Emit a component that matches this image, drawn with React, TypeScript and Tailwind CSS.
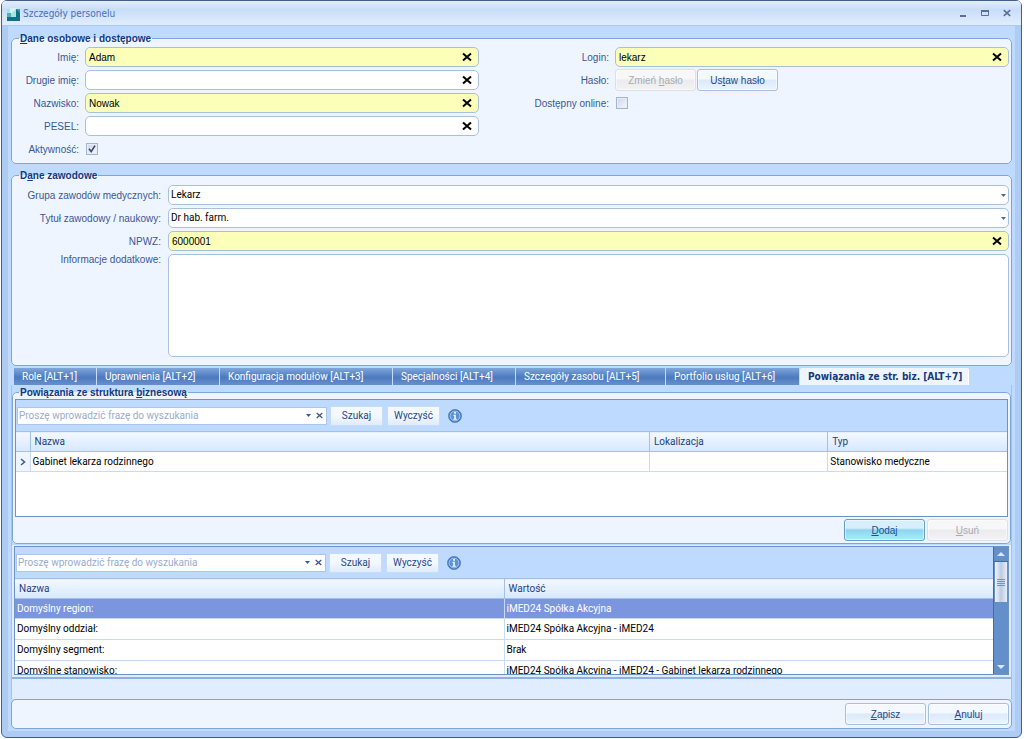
import { useId, useState } from "react";
import type { ReactNode } from "react";

const tabs = [
  { label: "Role [ALT+1]", width: "w-[83px]" },
  { label: "Uprawnienia [ALT+2]", width: "w-[123px]" },
  { label: "Konfiguracja modułów [ALT+3]", width: "w-[173px]" },
  { label: "Specjalności [ALT+4]", width: "w-[123px]" },
  { label: "Szczegóły zasobu [ALT+5]", width: "w-[150px]" },
  { label: "Portfolio usług [ALT+6]", width: "w-[134px]" },
  { label: "Powiązania ze str. biz. [ALT+7]", width: "w-[169px]" },
];

const settings = [
  { name: "Domyślny region:", value: "iMED24 Spółka Akcyjna" },
  { name: "Domyślny oddział:", value: "iMED24 Spółka Akcyjna - iMED24" },
  { name: "Domyślny segment:", value: "Brak" },
  {
    name: "Domyślne stanowisko:",
    value: "iMED24 Spółka Akcyjna - iMED24 - Gabinet lekarza rodzinnego",
  },
];

const headCell =
  "h-5 border-r border-b border-[#a3c0e8] bg-linear-to-b from-[#f3f8ff] to-[#d6e8ff] text-left font-normal text-[#1e3f7f] last:border-r-0";

function CrossIcon({ className }: { className: string }) {
  return (
    <svg viewBox="0 0 10 10" className={className} fill="none" stroke="currentColor">
      <path d="M1 1.4 9 8.6M9 1.4 1 8.6" />
    </svg>
  );
}

function Caret({ className = "" }: { className?: string }) {
  return (
    <svg viewBox="0 0 5 3" className={`h-[3px] w-[5px] ${className}`} fill="currentColor">
      <path d="M0 0h5L2.5 3z" />
    </svg>
  );
}

function InfoIcon() {
  return (
    <svg viewBox="0 0 14 14" className="size-[14px]">
      <circle cx="7" cy="7" r="6.5" fill="#2f66b4" stroke="#5d8ac8" />
      <circle cx="7" cy="7" r="5" fill="#5b93d8" stroke="#c9dff8" strokeWidth="0.8" />
      <path d="M5.4 5.7h2.4v4.1h1v1H5.3v-1h1V6.7h-.9zM6.2 3h1.7v1.7H6.2z" fill="#fff" />
    </svg>
  );
}

function Group({
  legend,
  className,
  children,
}: {
  legend: ReactNode;
  className: string;
  children: ReactNode;
}) {
  return (
    <fieldset
      className={`min-w-0 rounded-[5px] border border-[#7fa5d8] bg-[#eff5ff] ${className}`}
    >
      <legend className="ml-1 h-[14px] px-px font-[Liberation_Sans,sans-serif] leading-4 font-bold text-[#123a80]">
        {legend}
      </legend>
      {children}
    </fieldset>
  );
}

const labelStyle =
  "flex h-5 items-center justify-end pt-[2px] font-[Liberation_Sans,sans-serif] whitespace-nowrap text-[#3a5795]";

function TextField({
  label,
  value = "",
  required = false,
  labelClass = "",
}: {
  label: string;
  value?: string;
  required?: boolean;
  labelClass?: string;
}) {
  const id = useId();
  const [text, setText] = useState(value);
  return (
    <>
      <label htmlFor={id} className={`${labelStyle} ${labelClass}`}>
        {label}
      </label>
      <div
        className={`flex h-5 min-w-0 items-center rounded-[5px] border border-[#a9c0dd] pr-[6px] ${
          required ? "bg-[#fbffb8]" : "bg-white"
        }`}
      >
        <input
          id={id}
          value={text}
          onChange={(e) => setText(e.target.value)}
          className="h-full min-w-0 flex-1 bg-transparent pl-[3px] font-[Liberation_Sans,sans-serif] text-black outline-none"
        />
        <button type="button" aria-label="Wyczyść pole" onClick={() => setText("")}>
          <CrossIcon className="size-[10px] stroke-2 text-black" />
        </button>
      </div>
    </>
  );
}

function SelectField({ label, value }: { label: string; value: string }) {
  const id = useId();
  return (
    <>
      <label htmlFor={id} className={labelStyle}>
        {label}
      </label>
      <div className="relative h-5">
        <select
          id={id}
          className="h-5 w-full appearance-none rounded-[5px] border border-[#a9c0dd] bg-white pl-[2px] text-black outline-none"
        >
          <option>{value}</option>
        </select>
        <Caret className="pointer-events-none absolute top-[9px] right-[3px] text-[#4a6a96]" />
      </div>
    </>
  );
}

function CheckField({
  label,
  checked = false,
  labelClass = "",
}: {
  label: string;
  checked?: boolean;
  labelClass?: string;
}) {
  const id = useId();
  return (
    <>
      <label htmlFor={id} className={`${labelStyle} ${labelClass}`}>
        {label}
      </label>
      <div className="relative flex h-5 items-center pl-px">
        <input
          id={id}
          type="checkbox"
          defaultChecked={checked}
          className="peer size-3 appearance-none border border-[#a3b5cf] bg-linear-to-br from-[#ccd6e6] to-[#f6f9fd] shadow-[inset_0_0_0_1px_#e6edf7]"
        />
        <svg
          viewBox="0 0 12 12"
          className="pointer-events-none absolute left-px hidden size-3 peer-checked:block"
          fill="none"
          stroke="#3c4c6c"
          strokeWidth="1.7"
        >
          <path d="M3 5.8 5.2 8.6 9 2.6" />
        </svg>
      </div>
    </>
  );
}

function DialogButton({
  variant = "normal",
  children,
}: {
  variant?: "normal" | "primary" | "disabled";
  children: ReactNode;
}) {
  const look = {
    normal:
      "border-[#a5c0e2] bg-linear-to-b from-[#f4f8ff] from-45% via-[#dbe9fb] via-50% to-[#ecf4ff] text-[#26478a]",
    primary:
      "border-[#6a9cc8] bg-linear-to-b from-[#d6effb] from-40% via-[#8fd3ee] via-50% to-[#a4f0fb] text-[#1c4f96]",
    disabled:
      "border-[#dcdfe6] bg-linear-to-b from-[#f7f7f8] from-45% via-[#ebebed] via-50% to-[#f3f3f4] text-[#a9abb1]",
  };
  return (
    <button
      type="button"
      disabled={variant === "disabled"}
      className={`h-[22px] w-[81px] rounded-[3px] border pt-[2px] font-[Liberation_Sans,sans-serif] shadow-[inset_0_0_0_1px_#ffffff80] ${look[variant]}`}
    >
      {children}
    </button>
  );
}

function SearchBar() {
  const button =
    "h-5 w-[53px] border border-[#c9dcf5] bg-linear-to-b from-[#f4f9ff] from-45% to-[#dfecfc] text-[#26478a]";
  return (
    <div className="flex h-[31px] items-center bg-[#bfdaff] pl-px">
      <div className="flex h-[18px] w-[310px] items-center border border-[#a9c6ee] bg-white pr-[3px] text-[#3a5795]">
        <input
          aria-label="Fraza do wyszukania"
          placeholder="Proszę wprowadzić frazę do wyszukania"
          className="min-w-0 flex-1 bg-transparent pl-px outline-none placeholder:text-[#9aaccb]"
        />
        <button type="button" aria-label="Rozwiń" className="px-[5px]">
          <Caret />
        </button>
        <button type="button" aria-label="Wyczyść frazę">
          <CrossIcon className="size-[7px] stroke-[1.8]" />
        </button>
      </div>
      <button type="button" className={`ml-[3px] ${button}`}>
        Szukaj
      </button>
      <button type="button" className={`mr-2 ml-1 ${button}`}>
        Wyczyść
      </button>
      <InfoIcon />
    </div>
  );
}

function TitleBar() {
  return (
    <header className="flex h-[25px] shrink-0 items-center rounded-t-[4px] border-b border-[#abc8ef] bg-linear-to-b from-[#e4eefc] via-[#c9ddfa] via-35% to-[#e0edfd] pr-[10px] pl-[5px] text-[#4a6fb5]">
      <svg viewBox="0 0 14 14" className="mt-1 mr-[2px] size-[14px]">
        <path d="M0 1h9v9H0z" fill="#a9e2e2" />
        <path d="M3 0h7L3 7z" fill="#d3f3f1" />
        <path d="M0 5h4v4H0z" fill="#4fb0b6" />
        <path d="M9 1h4v12H0V9h9z" fill="#0f7284" />
        <path d="M9 1h4v4z" fill="#3d9ea9" />
      </svg>
      <h1 className="mt-[2px] flex-1 font-[DejaVu_Sans_Condensed,sans-serif]">
        Szczegóły personelu
      </h1>
      <div className="flex items-center gap-[14px] text-[#5a6f96]">
        <button type="button" aria-label="Minimalizuj">
          <svg viewBox="0 0 8 8" className="size-2">
            <path d="M1 6h6v2H1z" fill="currentColor" />
          </svg>
        </button>
        <button type="button" aria-label="Maksymalizuj">
          <svg viewBox="0 0 8 8" className="size-2">
            <path d="M.5 1.5h7v5h-7z" fill="none" stroke="currentColor" />
            <path d="M0 1h8v2H0z" fill="currentColor" />
          </svg>
        </button>
        <button type="button" aria-label="Zamknij">
          <CrossIcon className="size-2 stroke-2" />
        </button>
      </div>
    </header>
  );
}

function ScrollBar() {
  return (
    <div className="flex w-[15px] flex-col items-center border-l border-[#3d6cb0] bg-[#638fcb] text-[#dce8fa]">
      <div className="flex h-[15px] w-full items-center justify-center border-b border-[#3d6cb0]">
        <svg viewBox="0 0 8 4" className="h-1 w-2" fill="currentColor">
          <path d="M4 0l4 4H0z" />
        </svg>
      </div>
      <div className="flex h-10 w-3 flex-col items-center justify-center gap-px bg-linear-to-r from-[#f2f6fc] via-[#bccbe2] to-[#e6edf8]">
        <span className="h-px w-2 bg-[#6f94c8]" />
        <span className="h-px w-2 bg-[#6f94c8]" />
        <span className="h-px w-2 bg-[#6f94c8]" />
        <span className="h-px w-2 bg-[#6f94c8]" />
      </div>
      <svg viewBox="0 0 8 4" className="mt-auto mb-[5px] h-1 w-2" fill="currentColor">
        <path d="M0 0h8L4 4z" />
      </svg>
    </div>
  );
}

export default function App() {
  const [activeTab, setActiveTab] = useState(6);
  const [selected, setSelected] = useState(0);

  return (
    <div className="min-h-screen bg-white pr-[2px] pb-px pl-px font-[Roboto,Tahoma,sans-serif] text-[10px] leading-[14px]">
      <div className="flex min-h-[738px] flex-col rounded-[6px] border border-[#42608f] bg-[#aecbf4]">
        <TitleBar />

        <main className="mx-[6px] mb-[6px] flex flex-1 flex-col bg-[#bfdaff] px-[3px] pt-[5px] pb-[2px]">
          <Group
            legend={
              <>
                <u>D</u>ane osobowe i dostępowe
              </>
            }
            className="pt-[2px] pr-[2px] pb-1 pl-[3px]"
          >
            <div className="grid grid-cols-[64px_1fr_124px_1fr] gap-x-[6px] gap-y-[3px]">
              <TextField label="Imię:" value="Adam" required />
              <TextField label="Login:" value="lekarz" required />
              <TextField label="Drugie imię:" />
              <span className={labelStyle}>Hasło:</span>
              <div className="-my-px flex gap-px">
                <DialogButton variant="disabled">
                  Zmień <u>h</u>asło
                </DialogButton>
                <DialogButton>
                  Us<u>t</u>aw hasło
                </DialogButton>
              </div>
              <TextField label="Nazwisko:" value="Nowak" required />
              <CheckField label="Dostępny online:" />
              <TextField label="PESEL:" />
              <CheckField label="Aktywność:" checked labelClass="col-start-1" />
            </div>
          </Group>

          <Group
            legend={
              <>
                D<u>a</u>ne zawodowe
              </>
            }
            className="mt-1 pt-[3px] pr-[2px] pb-2 pl-[3px]"
          >
            <div className="grid grid-cols-[146px_1fr] gap-x-[7px] gap-y-[3px]">
              <SelectField label="Grupa zawodów medycznych:" value="Lekarz" />
              <SelectField label="Tytuł zawodowy / naukowy:" value="Dr hab. farm." />
              <TextField label="NPWZ:" value="6000001" required />
              <label htmlFor="notes" className={`${labelStyle} h-[10px]`}>
                Informacje dodatkowe:
              </label>
              <textarea
                id="notes"
                className="block h-[103px] w-full resize-none rounded-[5px] border border-[#a9c0dd] bg-white p-1 outline-none"
              />
            </div>
          </Group>

          <div role="tablist" className="mt-[2px] flex pl-[3px]">
            {tabs.map((tab, index) => (
              <button
                key={tab.label}
                type="button"
                role="tab"
                aria-selected={index === activeTab}
                onClick={() => setActiveTab(index)}
                className={`h-[17px] border-r pl-2 text-left whitespace-nowrap ${tab.width} ${
                  index === activeTab
                    ? "rounded-t-[2px] border-white bg-[#eff5ff] font-[DejaVu_Sans_Condensed,sans-serif] font-bold text-[#123a80]"
                    : "border-[#c5dbf8] bg-linear-to-b from-[#80a6da] via-[#4c7abf] via-55% to-[#688fcc] text-white"
                }`}
              >
                {tab.label}
              </button>
            ))}
          </div>

          <section className="flex flex-1 flex-col border-x border-[#a3c3ee]">
            <Group
              legend={
                <>
                  Powiązania ze struktura <u>b</u>iznesową
                </>
              }
              className="px-[2px] pb-[2px]"
            >
              <div className="h-[118px] border border-[#6c93c8] bg-white">
                <SearchBar />
                <table className="w-full table-fixed border-collapse border-t border-[#a3c0e8]">
                  <thead>
                    <tr>
                      <th className={`w-[14px] ${headCell}`} />
                      <th className={`w-[62.5%] pl-1 ${headCell}`}>Nazwa</th>
                      <th className={`w-[18%] pl-1 ${headCell}`}>Lokalizacja</th>
                      <th className={`pl-1 ${headCell}`}>Typ</th>
                    </tr>
                  </thead>
                  <tbody>
                    <tr className="h-5 border-b border-[#c9dbf2] text-black">
                      <td className="border-r border-[#c9dbf2] bg-[#eff5ff]">
                        <svg
                          viewBox="0 0 6 8"
                          className="mx-auto h-2 w-[6px]"
                          fill="none"
                          stroke="#3f5f94"
                          strokeWidth="1.6"
                        >
                          <path d="M1 1l3.5 3L1 7" />
                        </svg>
                      </td>
                      <td className="border-r border-[#c9dbf2] pl-[2px]">
                        Gabinet lekarza rodzinnego
                      </td>
                      <td className="border-r border-[#c9dbf2] pl-[2px]" />
                      <td className="pl-[2px]">Stanowisko medyczne</td>
                    </tr>
                  </tbody>
                </table>
              </div>
              <div className="mt-[2px] flex justify-end gap-[2px]">
                <DialogButton variant="primary">
                  <u>D</u>odaj
                </DialogButton>
                <DialogButton variant="disabled">
                  <u>U</u>suń
                </DialogButton>
              </div>
            </Group>

            <div className="mt-px border-b-2 border-[#8fb1de] bg-[#e0edff] px-[2px] pt-px pb-[2px]">
              <div className="flex h-[129px] overflow-hidden border border-[#6c93c8] bg-white">
                <div className="min-w-0 flex-1">
                  <SearchBar />
                  <table className="w-full table-fixed border-collapse border-t border-[#a3c0e8]">
                    <thead>
                      <tr>
                        <th className={`pl-1 ${headCell}`}>Nazwa</th>
                        <th className={`pl-1 ${headCell}`}>Wartość</th>
                      </tr>
                    </thead>
                    <tbody>
                      {settings.map((row, index) => (
                        <tr
                          key={row.name}
                          onClick={() => setSelected(index)}
                          className={`h-[21px] border-b border-[#c9dbf2] first:h-5 ${
                            index === selected ? "bg-[#7b96df] text-white" : "text-black"
                          }`}
                        >
                          <td className="border-r border-[#c9dbf2] pl-[2px]">{row.name}</td>
                          <td className="pl-[2px]">{row.value}</td>
                        </tr>
                      ))}
                    </tbody>
                  </table>
                </div>
                <ScrollBar />
              </div>
            </div>
            <div className="flex-1 bg-[#e0edff]" />
          </section>

          <footer className="flex justify-end gap-[2px] rounded-[5px] border border-[#7fa5d8] bg-[#eff5ff] px-[2px] py-[3px]">
            <DialogButton>
              <u>Z</u>apisz
            </DialogButton>
            <DialogButton>
              <u>A</u>nuluj
            </DialogButton>
          </footer>
        </main>
      </div>
    </div>
  );
}
